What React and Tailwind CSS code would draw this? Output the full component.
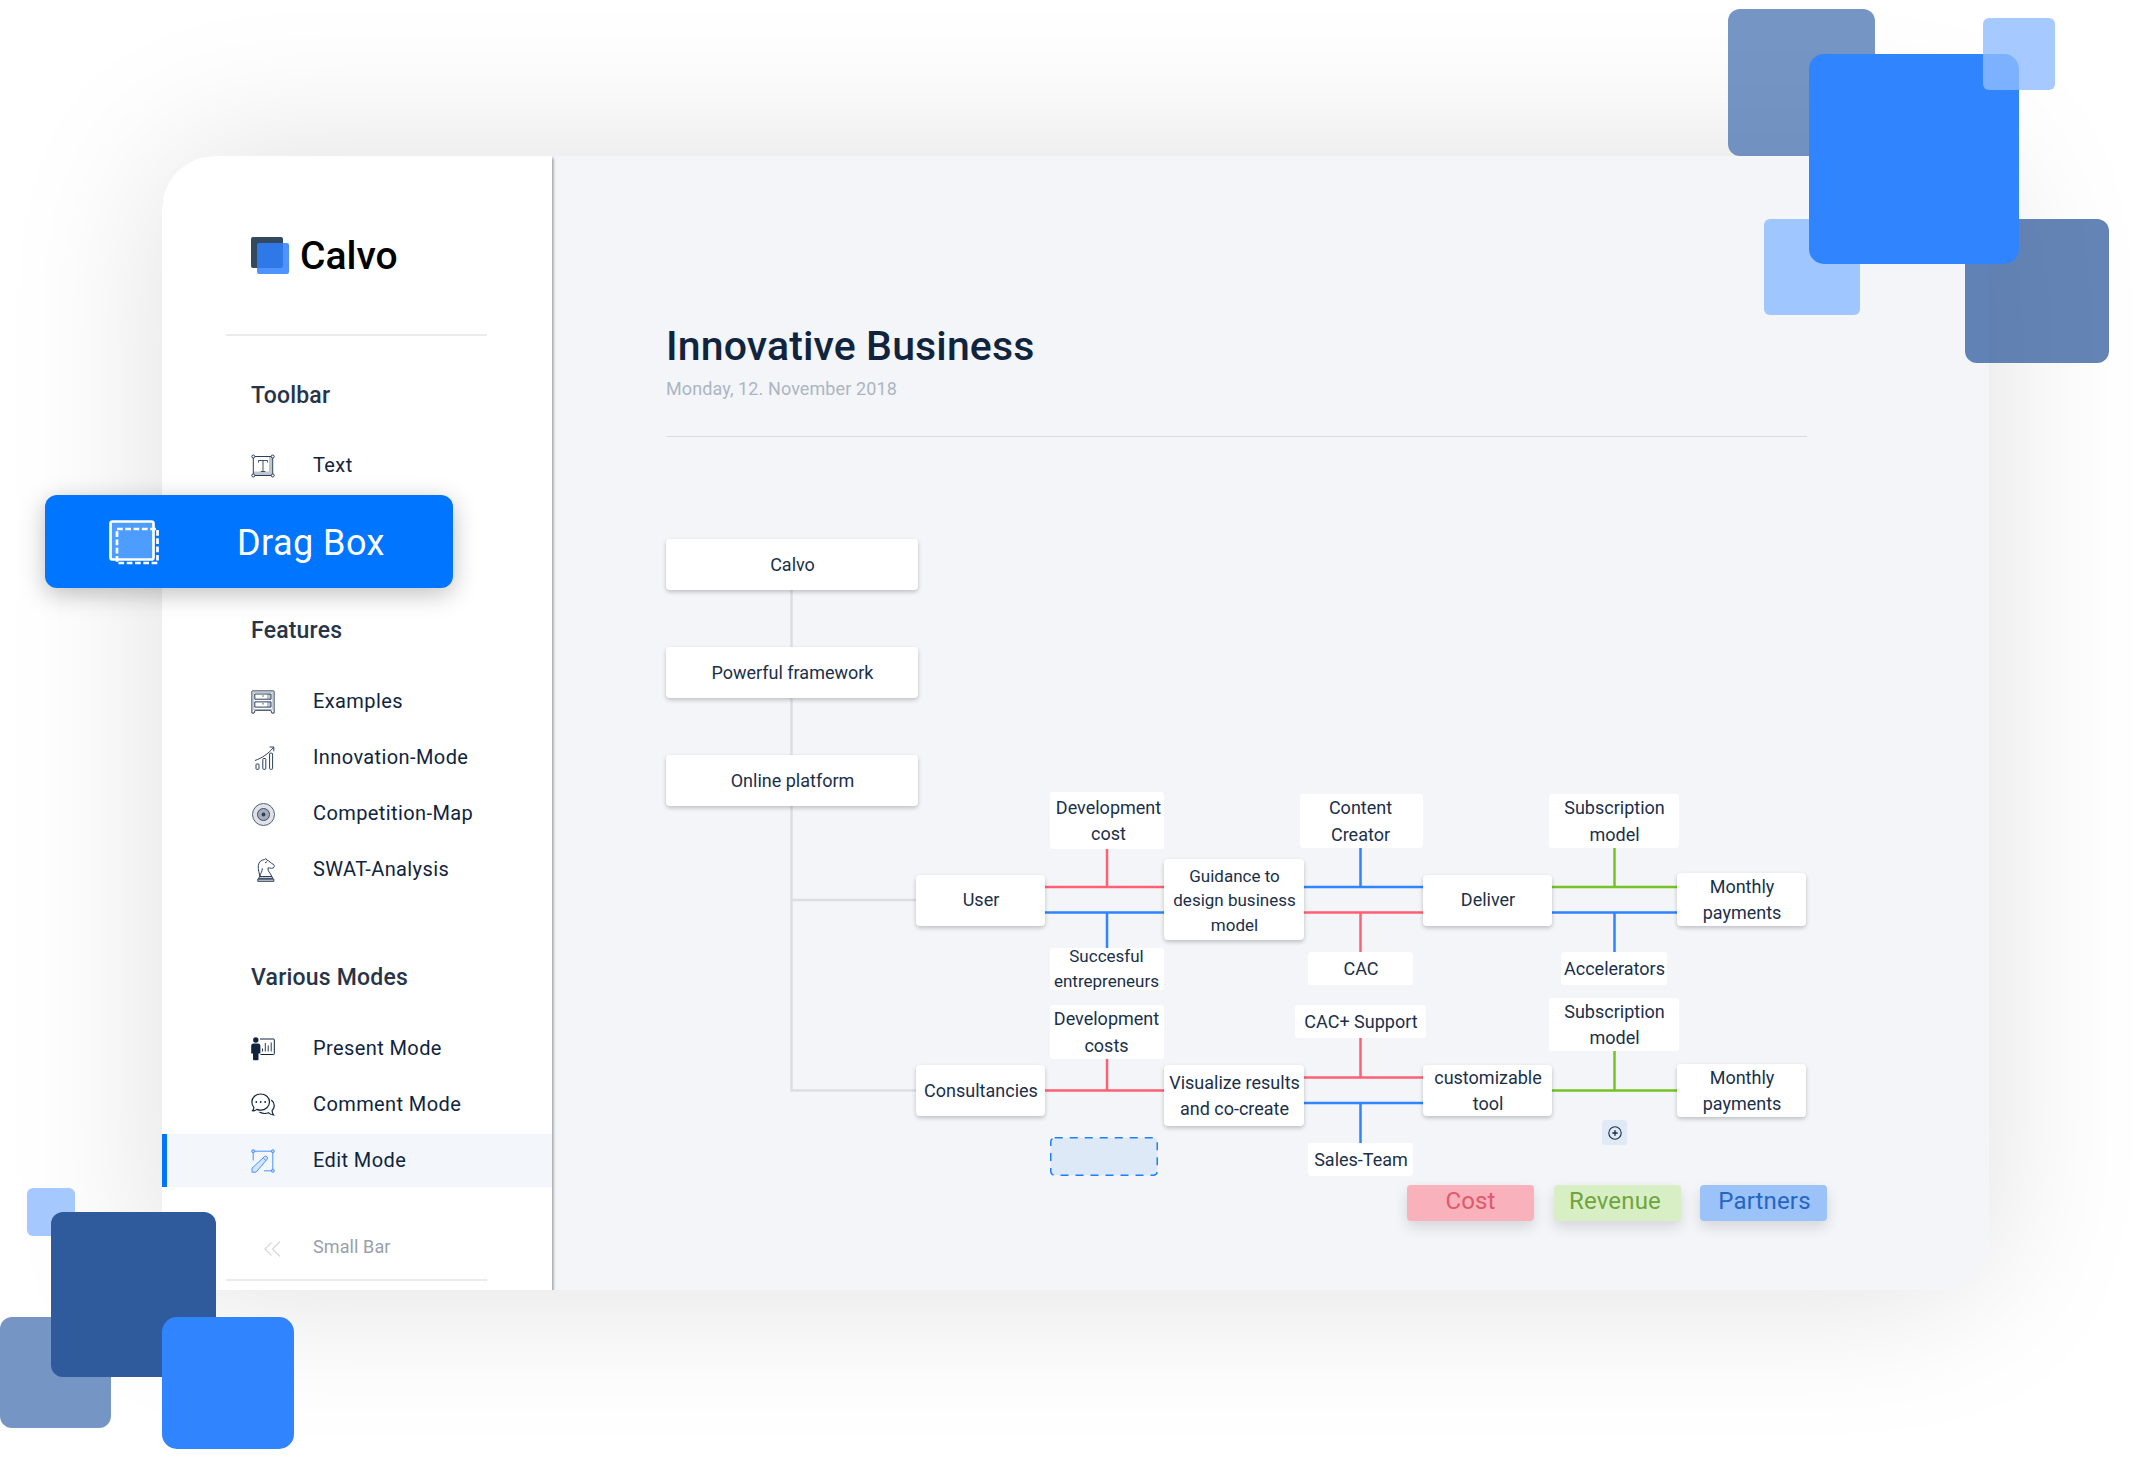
const ink = "text-[#10243e]";

function Svg({ children, size = 24, className = "text-[#2a3f5a]" }) {
  return (
    <svg width={size} height={size} viewBox="0 0 24 24" fill="none" stroke="currentColor" strokeWidth="1" className={"shrink-0 " + className}>
      {children}
    </svg>
  );
}

const TextIcon = () => (
  <Svg>
    <path d="M2.3 2.5h19.4v19H2.3z" />
    <path d="M18 3h3v18H3v-3.500h15z" fill="currentColor" fillOpacity="0.3" stroke="none" />
    <path d="M7.500 8.500v-2h9v2M12 6.500v11M9.700 17.500h4.600" strokeWidth="0.9" />
    <g fill="#fff">
      <circle cx="2.300" cy="2.500" r="1.500" />
      <circle cx="21.700" cy="2.500" r="1.500" />
      <circle cx="2.300" cy="21.500" r="1.500" />
      <circle cx="21.700" cy="21.500" r="1.500" />
    </g>
  </Svg>
);

const DrawersIcon = () => (
  <Svg>
    <path d="M1.500 0.900h21q0.600 0 0.600 0.600v21.600h-2.200l-1-2.800H4.100l-1 2.800H0.900V1.500q0-0.600 0.600-0.600z" />
    <path d="M2.600 2.500h18.800v17H2.600z" strokeWidth="0.300" />
    <path d="M16 4h3.800v5H16zM16 12h3.800v5H16z" fill="currentColor" fillOpacity="0.3" stroke="none" />
    <path d="M3.800 4h16.200v5.200H3.800zM3.800 11.900h16.200v5.200H3.800z" />
    <path d="M11.300 6h1.400M11.300 13.900h1.400" />
  </Svg>
);

const ChartIcon = () => (
  <Svg>
    <rect x="5" y="18" width="3" height="5.300" rx="0.800" />
    <rect x="11.800" y="12.500" width="3" height="10.800" rx="0.800" />
    <rect x="18.600" y="7.200" width="3" height="16.100" rx="0.800" />
    <path d="M4 14.500C11 12 17 8 22.500 1.500M18.600 1h4.200v4.200" />
  </Svg>
);

const TargetIcon = () => (
  <Svg>
    <circle cx="12.500" cy="12.500" r="11" strokeWidth="0.800" fill="currentColor" fillOpacity="0.15" />
    <circle cx="12.500" cy="12.500" r="6" strokeWidth="0.900" fill="currentColor" fillOpacity="0.32" />
    <circle cx="12.500" cy="12.500" r="1.900" fill="currentColor" stroke="none" />
  </Svg>
);

const KnightIcon = () => (
  <Svg>
    <path d="M9 18.500c0-3 2.500-4.500 2.300-8.200M8.800 18.500C8.500 15 6.800 12 7.300 7.500 7.700 4 10.500 1.800 13.500 1.600l1.300-1 1.200 1.500c2.500 0.800 3.500 3 6.700 4.500 1 1 0.800 2.500-0.700 3.500-1.800 0.700-3.500-0.600-5-0.100-0.500 3.500 2.300 4.500 3.800 8.500z" />
    <path d="M14 5l2-1.400" />
    <path d="M8.500 18.600h12.500l0.800 2.200H7.500zM6.800 21h16v2.300h-16z" fill="currentColor" fillOpacity="0.2" />
  </Svg>
);

const PresentIcon = () => (
  <Svg className="text-[#10243e]">
    <path d="M9 2h13.600q0.700 0 0.700 0.700v14.100q0 0.700-0.700 0.700H9.500" />
    <path d="M11.500 14.500v-3M14.300 14.500V6M17.200 14.500v-6M20.200 14.500v-9" strokeWidth="0.9" />
    <g fill="currentColor" stroke="none">
      <circle cx="4.800" cy="3" r="2.700" />
      <path d="M2.500 6.400h4.600c1.500 0 2.300 1 2.300 2.600v7.600H7.500v5.600q0 1-1 1H3q-1 0-1-1v-5.600H0.200V9c0-1.600 0.800-2.600 2.300-2.600z" />
    </g>
  </Svg>
);

const CommentIcon = () => (
  <Svg className="text-[#10243e]">
    <path d="M9.700 1C14.500 1 18.500 4.500 18.500 9s-4 8.200-8.800 8.200c-1.400 0-2.700-0.300-3.800-0.800-1.200 1-2.800 1.600-4.400 1.300 1-1 1.500-2.300 1.300-3.500C1.500 12.800 0.900 11 0.900 9 0.900 4.500 4.900 1 9.700 1z" strokeWidth="1.200" />
    <path d="M20.300 7c2.300 1.800 3.200 4 2.900 6.400-0.200 1.700-1 3-2.100 4 0 1.600 0.500 3.200 1.500 4.600-2-0.200-3.700-1-4.900-2.200-3.500 1.200-6.700 0.700-9.300-0.800" strokeWidth="1.200" />
    <g fill="currentColor" stroke="none">
      <circle cx="5.300" cy="9" r="0.900" />
      <circle cx="9.700" cy="9" r="0.900" />
      <circle cx="14.100" cy="9" r="0.900" />
    </g>
  </Svg>
);

const EditIcon = () => (
  <Svg className="text-[#4a93ff]">
    <path d="M3.500 2.200h17M2.200 3.500v8M21.800 3.500v17M13 21.800h7.500" />
    <path d="M1 23.200v-4L13.500 7.600q1.300-1 2.500 0.200 1.100 1.300 0 2.500L5 23.200zM12.300 9l2.700 2.700" fill="#d3e5ff" />
    <g fill="#b9d5ff">
      <circle cx="2.200" cy="2.200" r="1.500" />
      <circle cx="21.800" cy="2.200" r="1.500" />
      <circle cx="21.800" cy="21.800" r="1.500" />
    </g>
  </Svg>
);

function NavItem({ icon, label, active = false }) {
  return (
    <li
      className={
        "flex h-[53px] items-center border-l-[5px] pl-[84px] mb-[3px] " +
        (active ? "border-[#0075ff] bg-[#f3f7fc]" : "border-transparent")
      }
    >
      {icon}
      <span className={"-mt-[2px] ml-[38px] text-[20px] tracking-[0.4px] whitespace-nowrap " + ink}>{label}</span>
    </li>
  );
}

function Heading({ children }) {
  return <h2 className="ml-[89px] text-[23px] leading-[28px] font-medium tracking-[0.2px] text-[#26344a]">{children}</h2>;
}

function Sidebar() {
  return (
    <aside className="relative flex h-full w-[390px] shrink-0 flex-col bg-white shadow-[1px_2px_3px_rgba(0,0,0,0.45)]">
      <div className="mt-[76px] ml-[89px] flex h-[48px] items-center gap-[11px]">
        <svg width="38" height="38" viewBox="0 0 38 38">
          <rect width="32" height="31" rx="2" fill="#34495e" />
          <rect x="6" y="6" width="32" height="31" rx="2" fill="#2f80ff" fillOpacity="0.85" />
        </svg>
        <span className="text-[39px] font-medium leading-[48px] text-black">Calvo</span>
      </div>
      <hr className="mt-[54px] ml-[64px] w-[261px] border-t-2 border-[#ebebeb]" />
      <div className="mt-[46px]">
        <Heading>Toolbar</Heading>
      </div>
      <ul className="mt-[29px]">
        <NavItem icon={<TextIcon />} label="Text" />
      </ul>
      <div className="mt-[122px]">
        <Heading>Features</Heading>
      </div>
      <ul className="mt-[30px]">
        <NavItem icon={<DrawersIcon />} label="Examples" />
        <NavItem icon={<ChartIcon />} label="Innovation-Mode" />
        <NavItem icon={<TargetIcon />} label="Competition-Map" />
        <NavItem icon={<KnightIcon />} label="SWAT-Analysis" />
      </ul>
      <div className="mt-[65px]">
        <Heading>Various Modes</Heading>
      </div>
      <ul className="mt-[30px]">
        <NavItem icon={<PresentIcon />} label="Present Mode" />
        <NavItem icon={<CommentIcon />} label="Comment Mode" />
        <NavItem icon={<EditIcon />} label="Edit Mode" active />
      </ul>
      <div className="mt-[42px] ml-[102px] flex h-[30px] items-center text-[18px] tracking-[0.1px] text-[#9a9fac]">
        <svg width="17" height="16" viewBox="0 0 17 16" fill="none" stroke="#d5d7dc" strokeWidth="1.200" className="mt-1">
          <path d="M7.500 1.500L1 8l6.500 6.500M16 0.500L8.500 8l7.500 7.500" />
        </svg>
        <span className="-mt-px ml-[32px]">Small Bar</span>
      </div>
      <hr className="mt-[17px] ml-[64px] w-[261px] border-t-2 border-[#ebebeb]" />
    </aside>
  );
}

/* Diagram coordinates are relative to the top-left corner of the canvas. */
const boxes = [
  { x: 0, y: 0, w: 252, h: 51, lines: ["Calvo"] },
  { x: 0, y: 108, w: 252, h: 51, lines: ["Powerful framework"] },
  { x: 0, y: 216, w: 252, h: 51, lines: ["Online platform"] },
  { x: 250, y: 335.500, w: 129, h: 51, lines: ["User"] },
  { x: 498, y: 320, w: 140, h: 81, lines: ["Guidance to", "design business", "model"], small: true },
  { x: 757, y: 335.500, w: 129, h: 51, lines: ["Deliver"] },
  { x: 1011, y: 334, w: 129, h: 53, lines: ["Monthly", "payments"] },
  { x: 250, y: 526, w: 129, h: 51, lines: ["Consultancies"] },
  { x: 498, y: 526, w: 140, h: 61, lines: ["Visualize results", "and co-create"] },
  { x: 757, y: 526, w: 129, h: 51, lines: ["customizable", "tool"] },
  { x: 1011, y: 525, w: 129, h: 53, lines: ["Monthly", "payments"] },
  { x: 384, y: 253, w: 114, h: 57, lines: ["Development", "cost"], flat: true, dx: 1.500 },
  { x: 384, y: 409, w: 114, h: 42, lines: ["Succesful", "entrepreneurs"], flat: true, small: true, dx: -0.500, dy: -0.500 },
  { x: 634, y: 255, w: 123, h: 54, lines: ["Content", "Creator"], flat: true, dx: -1 },
  { x: 642, y: 413, w: 105, h: 33, lines: ["CAC"], flat: true },
  { x: 883, y: 255, w: 130, h: 54, lines: ["Subscription", "model"], flat: true },
  { x: 895, y: 413, w: 106, h: 33, lines: ["Accelerators"], flat: true },
  { x: 384, y: 466, w: 114, h: 54, lines: ["Development", "costs"], flat: true, dx: -0.500 },
  { x: 629, y: 466, w: 131, h: 33, lines: ["CAC+ Support"], flat: true },
  { x: 642, y: 604, w: 105, h: 33, lines: ["Sales-Team"], flat: true },
  { x: 883, y: 459, w: 130, h: 53, lines: ["Subscription", "model"], flat: true },
];

const wires = [
  ["#dcdee3", "M125.500 51V108M125.500 159V216M125.500 267V551.500H250M125.500 361H250"],
  ["#ff6073", "M379 348H498M441 310V348M638 373.500H757M694.500 373.500V413M379 551.500H498M441 520V551.500M638 538.500H757M694.500 499V538.500"],
  ["#2f84ff", "M379 373.500H498M441 373.500V409M638 348H757M694.500 309V348M886 373.500H1011M948.500 373.500V413M638 564H757M694.500 564V604"],
  ["#76c423", "M886 348H1011M948.500 309V348M886 551.500H1011M948.500 512V551.500"],
];

function Diagram() {
  return (
    <div className="relative mt-[102px] h-[640px] w-[1142px]">
      <svg width="1142" height="640" viewBox="0 0 1142 640" fill="none" className="absolute top-0 left-0">
        {wires.map(([color, d]) => (
          <path key={color} d={d} stroke={color} strokeWidth="2.500" />
        ))}
      </svg>
      {boxes.map((b, i) => (
        <div
          key={i}
          style={{ left: b.x, top: b.y, width: b.w, height: b.h }}
          className={
            "absolute flex flex-col items-center justify-center bg-white whitespace-nowrap text-[#1b2f49] " +
            (b.flat ? "rounded-[3px] " : "rounded-[4px] shadow-[0_2px_4px_rgba(0,0,0,0.22)] ") +
            (b.small ? "text-[17px] leading-[24.500px]" : "text-[18px] leading-[26.700px]")
          }
        >
          {b.lines.map((line) => (
            <span key={line} className="relative" style={{ left: b.dx ?? 0.5, top: b.dy ?? 0.8 }}>
              {line}
            </span>
          ))}
        </div>
      ))}
      <svg width="108" height="39" viewBox="0 0 108 39" className="absolute top-[598px] left-[384px]">
        <rect x="0.750" y="0.750" width="106.500" height="37.500" rx="4" fill="#dde9f7" stroke="#1a80ff" strokeWidth="1.500" strokeDasharray="8 7" />
      </svg>
      <div className="absolute top-[581px] left-[936px] flex h-[25px] w-[25px] items-center justify-center rounded-[3px] bg-[#e0eaf6]">
        <svg width="14" height="14" viewBox="0 0 14 14" fill="none" stroke="#1b2f49" strokeWidth="1.100">
          <circle cx="7" cy="7" r="6.200" />
          <path d="M7 4.300v5.400M4.300 7h5.400" strokeWidth="1.400" />
        </svg>
      </div>
    </div>
  );
}

function Legend() {
  const tag = "flex h-[36px] w-[127px] shrink-0 items-center justify-center rounded-[4px] pb-[4px] text-[24px] tracking-[0.15px] shadow-[0_6px_14px_rgba(0,0,0,0.13)] ";
  return (
    <div className="mt-[6px] ml-[741px] flex gap-[19.500px]">
      <span className={tag + "bg-[#f9b1bb] text-[#df5a6c]"}>Cost</span>
      <span className={tag + "bg-[#d8efc5] pr-[4px] text-[#6fa53c]"}>Revenue</span>
      <span className={tag + "bg-[#9cc2fa] pl-[2px] text-[#2566c4]"}>Partners</span>
    </div>
  );
}

function Square({ className }) {
  return <div className={"absolute " + className} />;
}

export default function App() {
  return (
    <div className="relative h-[1458px] w-[2151px] overflow-hidden bg-white pt-[156px] pl-[162px] font-['Roboto',sans-serif]">
      <main className="h-[1134px] w-[1827px] rounded-[54px] rounded-bl-none shadow-[0_0_160px_rgba(0,0,0,0.13)]">
        <div className="flex h-full overflow-hidden rounded-[54px] rounded-bl-none bg-[#f3f5f9]">
          <Sidebar />
          <section className="ml-[114px] w-[1142px]">
            <h1 className="mt-[164px] text-[41px] leading-[52px] font-medium tracking-[0.13px] whitespace-nowrap text-[#10243e]">Innovative Business</h1>
            <p className="mt-[5px] text-[18px] leading-[24px] tracking-[0.1px] text-[#acb5c1]">Monday, 12. November 2018</p>
            <hr className="mt-[35px] w-[1141px] border-t border-[#d9dce1]" />
            <Diagram />
            <Legend />
          </section>
        </div>
      </main>

      <div className="absolute top-[495px] left-[45px] flex h-[93px] w-[408px] items-center rounded-[12px] bg-[#0075ff] pl-[64px] shadow-[0_6px_24px_rgba(0,0,0,0.25)]">
        <svg width="51" height="46" viewBox="0 0 51 46" fill="none" stroke="#fff" className="mt-[3px]">
          <rect x="1.500" y="1.500" width="43" height="38" rx="2" strokeWidth="2.700" fill="#4c9dff" />
          <rect x="8" y="9" width="40.500" height="34" strokeWidth="2.700" strokeDasharray="5.700 2.600" />
        </svg>
        <span className="mt-[2px] ml-[77px] text-[36px] tracking-[0.45px] text-white">Drag Box</span>
      </div>

      <Square className="top-[9px] left-[1728px] size-[147px] rounded-[12px] bg-[#3a68ab]/70" />
      <Square className="top-[219px] left-[1965px] size-[144px] rounded-[12px] bg-[#2f5b9c]/75" />
      <Square className="top-[219px] left-[1764px] size-[96px] rounded-[6px] bg-[#9fc6ff]" />
      <Square className="top-[54px] left-[1809px] size-[210px] rounded-[15px] bg-[#3085fe]" />
      <Square className="top-[18px] left-[1983px] size-[72px] rounded-[6px] bg-[#90bcff]/80" />

      <Square className="top-[1188px] left-[27px] size-[48px] rounded-[6px] bg-[#a5c9ff]" />
      <Square className="top-[1317px] left-0 size-[111px] rounded-[12px] bg-[#3a68ab]/70" />
      <Square className="top-[1212px] left-[51px] size-[165px] rounded-[12px] bg-[#2f5b9c]" />
      <Square className="top-[1317px] left-[162px] size-[132px] rounded-[15px] bg-[#3085fe]" />
    </div>
  );
}
